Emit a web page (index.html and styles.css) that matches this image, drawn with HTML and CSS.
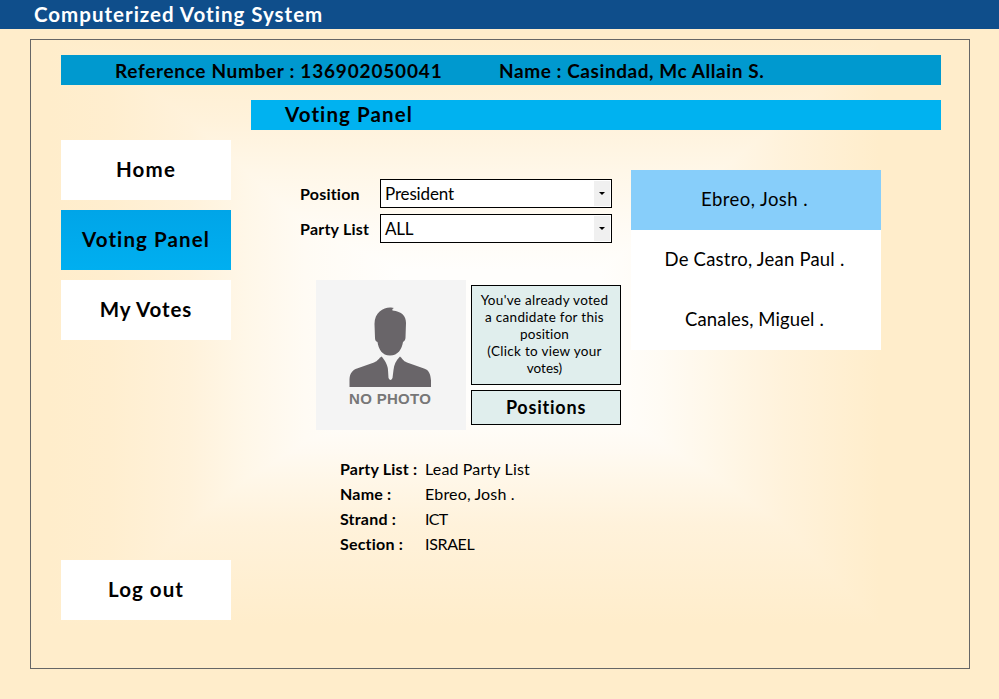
FILE: index.html
```html
<!DOCTYPE html>
<html lang="en">
<head>
<meta charset="utf-8">
<title>Computerized Voting System</title>
<link rel="stylesheet" href="styles.css">
</head>
<body>
<header class="titlebar"><span class="t-app">Computerized Voting System</span></header>
<div class="frame">
  <div class="voter-bar">
    <span class="t-ref">Reference Number : <span class="t-num">136902050041</span></span>
    <span class="t-voter">Name : Casindad, Mc Allain S.</span>
  </div>
  <div class="columns">
    <nav class="sidebar">
      <button class="nav"><span class="t-home">Home</span></button>
      <button class="nav active"><span class="t-vp">Voting Panel</span></button>
      <button class="nav"><span class="t-votes">My Votes</span></button>
      <button class="nav logout"><span class="t-logout">Log out</span></button>
    </nav>
    <main class="main">
      <h1 class="section"><span class="t-vp">Voting Panel</span></h1>
      <div class="workspace">
        <div class="ballot">
          <div class="filters">
            <div class="filter"><label><span class="t-pos">Position</span></label><div class="select"><span class="t-pres">President</span><i class="drop"></i></div></div>
            <div class="filter"><label><span class="t-pos">Party List</span></label><div class="select"><span class="t-all">ALL</span><i class="drop"></i></div></div>
          </div>
          <div class="card">
            <div class="photo">
              <svg width="150" height="150" viewBox="0 0 150 150">
                <g fill="#696569">
                  <path d="M75 27.500C68 27 58.500 32 58.500 44L59 58C59 60.500 60 61.500 61.500 62C62.500 69 66 75.500 74 75.500C82 75.500 86 69 87 62C88.500 61 89.500 60 89.500 57.500L90 43C90 36 86 31.500 76.500 30.500C76 29.500 76.500 28.500 78 28Z"/>
                  <path d="M33.500 107V99C34 92.500 37 90 41 88.500L58 82.500C62 81 63 78 65.500 76.500C68 79 72 85 72 90L72.500 98Q74.500 102 76.500 98L77.500 90C78 85 80 80 84 76.500C86 78 87 81 91 82.500L108 88.500C113 90 114.500 94 115 100.500V107Z"/>
                </g>
                <text x="33" y="124" textLength="82" class="photo-text">NO PHOTO</text>
              </svg>
            </div>
            <div class="actions">
              <button class="notice"><span class="t-n">You've already voted</span><br><span class="t-n">a candidate for this</span><br><span class="t-n3">position</span><br><span class="t-n">(Click to view your</span><br><span class="t-n5">votes)</span></button>
              <button class="positions"><span class="t-positions">Positions</span></button>
            </div>
          </div>
          <dl class="details">
            <dt>Party List :</dt><dd>Lead Party List</dd>
            <dt>Name :</dt><dd>Ebreo, Josh .</dd>
            <dt>Strand :</dt><dd><span class="t-ict">ICT</span></dd>
            <dt>Section :</dt><dd><span class="t-israel">ISRAEL</span></dd>
          </dl>
        </div>
        <ul class="candidates">
          <li class="picked"><span class="t-c1">Ebreo, Josh .</span></li>
          <li><span class="t-c2">De Castro, Jean Paul .</span></li>
          <li><span class="t-c3">Canales, Miguel .</span></li>
        </ul>
      </div>
    </main>
  </div>
</div>
</body>
</html>
```
FILE: styles.css
```css
* { box-sizing: border-box; }
body {
  margin: 0;
  height: 699px;
  overflow: hidden;
  font: 18px/1.2 Lato, "Open Sans", sans-serif;
  font-variant-ligatures: none;
  color: #000;
  background:
    linear-gradient(to right, #ffedcb 50px, #ffeecf 110px, #fff2db 190px, #fff7e8 245px, #fffbf4 305px, #fffefc 400px, #fffefc 600px, #fffbf4 660px, #fff7e8 720px, #fff2db 783px, #ffedcb 880px),
    linear-gradient(to bottom, #ffedcb 40px, #fff2db 120px, #fff7e8 170px, #fffbf4 225px, #fffefc 270px, #fffefc 410px, #fffaf2 450px, #fff7e8 480px, #fff2db 525px, #ffedcb 625px);
  background-blend-mode: darken;
}
button { border: 0; border-radius: 0; padding: 0; font: inherit; color: inherit; }
span { white-space: pre; }
.titlebar {
  height: 29px;
  padding-left: 34px;
  background: #0f4e8b;
  color: #fff;
  font-size: 20.500px;
  font-weight: 700;
  line-height: 28px;
}
.frame {
  width: 940px;
  height: 630px;
  margin: 10px 0 0 30px;
  padding: 15px 28px 0 30px;
  border: 1px solid #666;
}
.voter-bar {
  display: grid;
  grid-template-columns: 384px 1fr;
  height: 30px;
  padding-left: 54px;
  background: #0099cf;
  font-size: 19px;
  font-weight: 700;
  line-height: 31px;
}
.columns { display: grid; grid-template-columns: 170px 690px; column-gap: 20px; padding-top: 15px; }
.sidebar { display: flex; flex-direction: column; gap: 10px; height: 520px; padding-top: 40px; }
.nav { height: 60px; padding-bottom: 1px; background: #fff; font-size: 20.500px; font-weight: 700; }
.nav.active { background: linear-gradient(#00a5e8, #00aff0); }
.sidebar .logout { margin-top: auto; }
.section {
  height: 30px;
  margin: 0;
  padding-left: 34px;
  background: #00b2f0;
  font-size: 20.500px;
  line-height: 29px;
}
.workspace { display: grid; grid-template-columns: 380px 250px; align-items: start; padding-top: 40px; }
.ballot { padding: 9px 0 0 49px; }
.filters { display: grid; gap: 6px; }
.filter { display: grid; grid-template-columns: 80px 232px; height: 29px; }
.filter label { font-size: 16px; font-weight: 700; line-height: 29px; }
.select {
  display: flex;
  justify-content: space-between;
  height: 29px;
  padding: 1px 1px 1px 4px;
  border: 1px solid #000;
  background: #fff;
  font-size: 17px;
  line-height: 25px;
}
.drop { display: grid; place-items: center; width: 16px; background: #f0f0f0; }
.drop::after { content: ""; border: 3px solid transparent; border-top-color: #000; border-bottom: 0; }
.card { display: flex; gap: 5px; padding: 37px 0 0 16px; }
.photo { width: 150px; height: 150px; background: #f4f4f4; }
.photo svg { display: block; }
.photo-text { font: 700 15px "Liberation Sans", sans-serif; fill: #777; }
.actions { display: flex; flex-direction: column; gap: 5px; padding-top: 5px; }
.notice, .positions { width: 150px; border: 1px solid #000; background: #e0eeed; }
.notice { height: 100px; padding: 0 3px 1px 0; font-size: 13.500px; line-height: 17px; }
.positions { height: 35px; font-size: 18px; font-weight: 700; }
.details {
  display: grid;
  grid-template-columns: 85px 1fr;
  margin: 26px 0 0 40px;
  font-size: 16px;
  line-height: 25px;
  letter-spacing: 0.15px;
}
.details dt { font-weight: 700; letter-spacing: 0.2px; }
.details dd { margin: 0; }
.candidates { margin: 0; padding: 0; list-style: none; background: #fff; }
.candidates li { height: 60px; padding-right: 3px; font-size: 18.500px; line-height: 59px; text-align: center; }
.candidates .picked { background: #87cefa; }

/* Tracking per label */
.t-app { letter-spacing: 1px; }
.t-ref { letter-spacing: 0.67px; }
.t-num { letter-spacing: 0.83px; }
.t-voter { letter-spacing: 0.57px; }
.t-vp { letter-spacing: 1.100px; }
.t-home { letter-spacing: 1.200px; }
.t-votes { letter-spacing: 0.900px; }
.t-logout { letter-spacing: 1.050px; }
.t-pos { letter-spacing: 0.220px; }
.t-pres { letter-spacing: -0.150px; }
.t-all { letter-spacing: -0.300px; }
.t-n { letter-spacing: 0.300px; }
.t-n3 { letter-spacing: 0.150px; }
.t-positions { letter-spacing: 0.780px; }
.t-ict { letter-spacing: -0.700px; }
.t-israel { letter-spacing: -0.350px; }
.t-c1 { letter-spacing: 0.450px; }
.t-c2 { letter-spacing: 0.220px; }
.t-c3 { letter-spacing: 0.120px; }
```
